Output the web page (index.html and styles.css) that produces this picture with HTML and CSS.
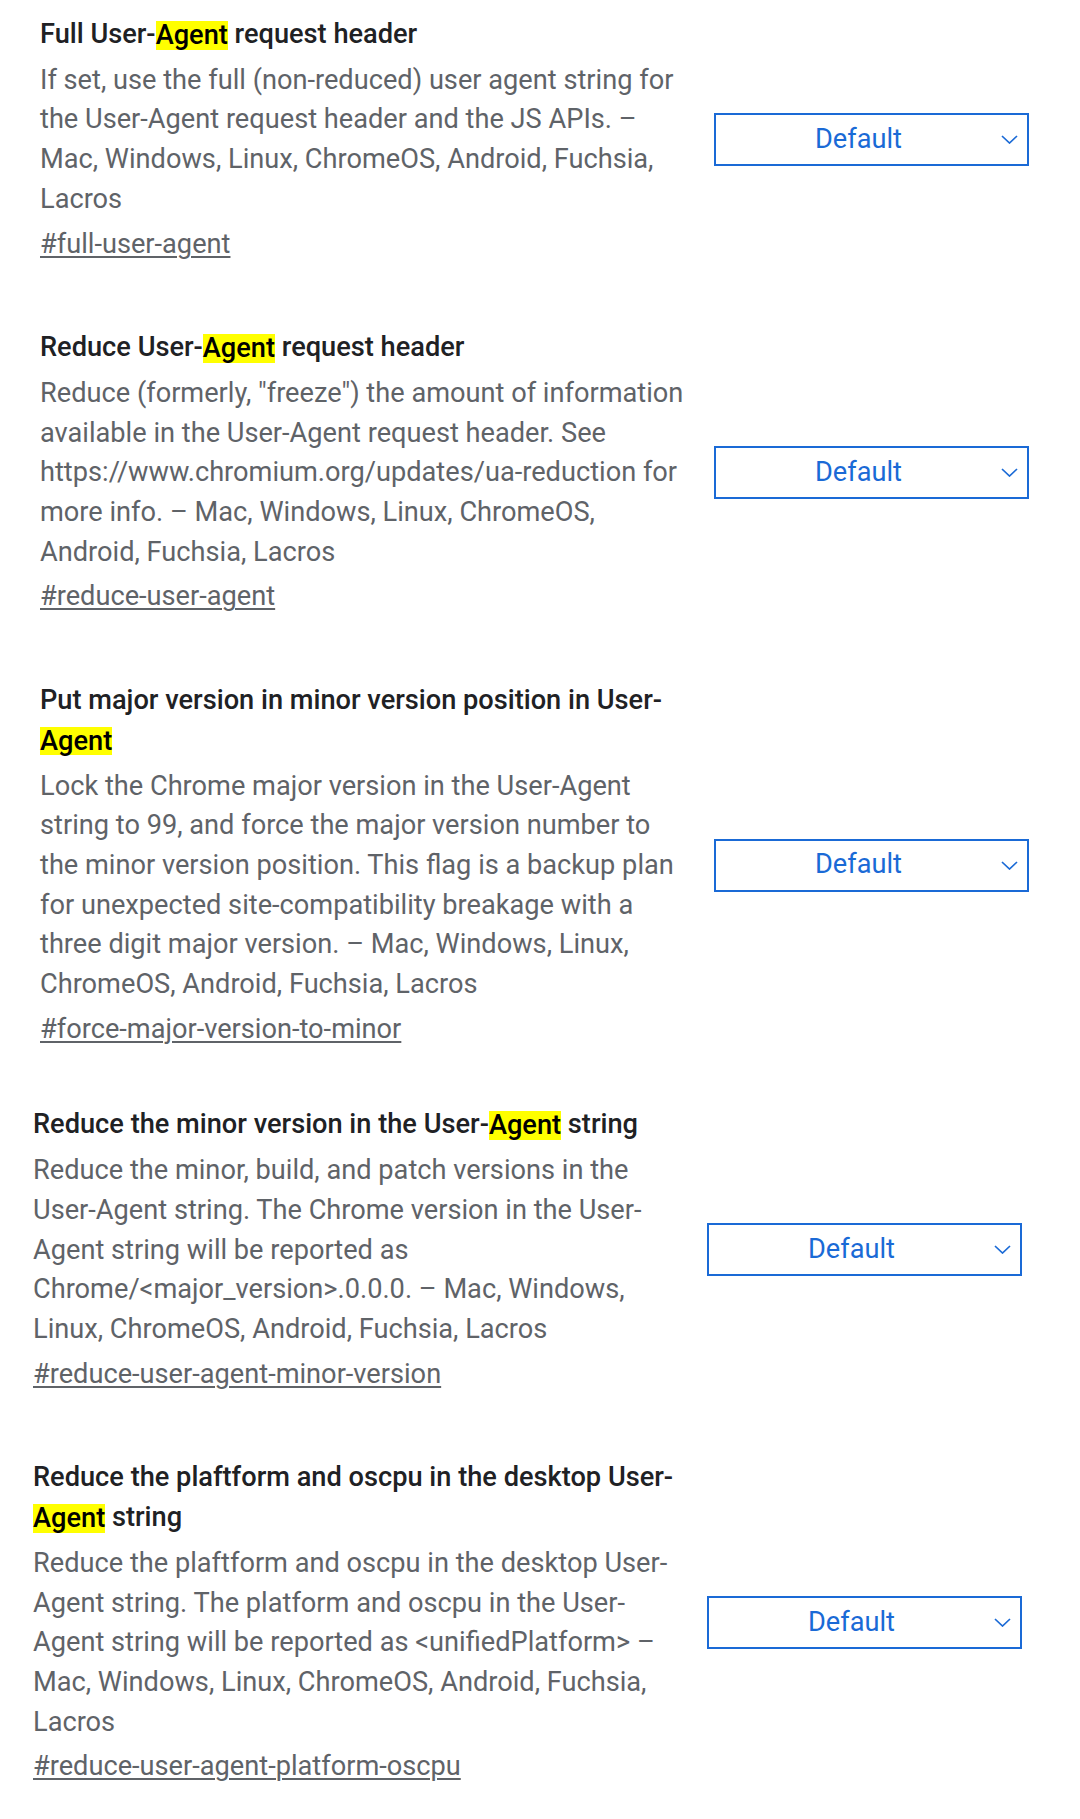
FILE: index.html
```html
<!DOCTYPE html>
<html lang="en">
<head>
<meta charset="utf-8">
<title>Flags</title>
<link rel="stylesheet" href="styles.css">
</head>
<body>
<div class="list">
  <div class="experiment">
    <div class="exp-text">
      <h2 class="exp-name">Full User-<span class="hl">Agent</span> request header</h2>
      <p class="exp-desc">If set, use the full (non-reduced) user agent string for the User-Agent request header and the JS APIs. – Mac, Windows, Linux, ChromeOS, Android, Fuchsia, Lacros</p>
      <p class="exp-link"><a class="permalink" href="#full-user-agent">#full-user-agent</a></p>
    </div>
    <div class="select">
      <span class="select-label">Default</span>
      <svg class="chevron" viewBox="0 0 17 9"><polyline points="1,1 8.5,8 16,1" /></svg>
    </div>
  </div>

  <div class="experiment">
    <div class="exp-text">
      <h2 class="exp-name">Reduce User-<span class="hl">Agent</span> request header</h2>
      <p class="exp-desc">Reduce (formerly, "freeze") the amount of information available in the User-Agent request header. See https://www.chromium.org/updates/ua-reduction for more info. – Mac, Windows, Linux, ChromeOS, Android, Fuchsia, Lacros</p>
      <p class="exp-link"><a class="permalink" href="#reduce-user-agent">#reduce-user-agent</a></p>
    </div>
    <div class="select">
      <span class="select-label">Default</span>
      <svg class="chevron" viewBox="0 0 17 9"><polyline points="1,1 8.5,8 16,1" /></svg>
    </div>
  </div>

  <div class="experiment">
    <div class="exp-text">
      <h2 class="exp-name">Put major version in minor version position in User-<span class="hl">Agent</span></h2>
      <p class="exp-desc">Lock the Chrome major version in the User-Agent string to 99, and force the major version number to the minor version position. This flag is a backup plan for unexpected site-compatibility breakage with a three digit major version. – Mac, Windows, Linux, ChromeOS, Android, Fuchsia, Lacros</p>
      <p class="exp-link"><a class="permalink" href="#force-major-version-to-minor">#force-major-version-to-minor</a></p>
    </div>
    <div class="select">
      <span class="select-label">Default</span>
      <svg class="chevron" viewBox="0 0 17 9"><polyline points="1,1 8.5,8 16,1" /></svg>
    </div>
  </div>

  <div class="experiment experiment--shift experiment--tight">
    <div class="exp-text">
      <h2 class="exp-name">Reduce the minor version in the User-<span class="hl">Agent</span> string</h2>
      <p class="exp-desc">Reduce the minor, build, and patch versions in the User-Agent string. The Chrome version in the User-Agent string will be reported as Chrome/&lt;major_version&gt;.0.0.0. – Mac, Windows, Linux, ChromeOS, Android, Fuchsia, Lacros</p>
      <p class="exp-link"><a class="permalink" href="#reduce-user-agent-minor-version">#reduce-user-agent-minor-version</a></p>
    </div>
    <div class="select">
      <span class="select-label">Default</span>
      <svg class="chevron" viewBox="0 0 17 9"><polyline points="1,1 8.5,8 16,1" /></svg>
    </div>
  </div>

  <div class="experiment experiment--shift">
    <div class="exp-text">
      <h2 class="exp-name">Reduce the plaftform and oscpu in the desktop User-<span class="hl">Agent</span> string</h2>
      <p class="exp-desc">Reduce the plaftform and oscpu in the desktop User-Agent string. The platform and oscpu in the User-Agent string will be reported as &lt;unifiedPlatform&gt; – Mac, Windows, Linux, ChromeOS, Android, Fuchsia, Lacros</p>
      <p class="exp-link"><a class="permalink" href="#reduce-user-agent-platform-oscpu">#reduce-user-agent-platform-oscpu</a></p>
    </div>
    <div class="select">
      <span class="select-label">Default</span>
      <svg class="chevron" viewBox="0 0 17 9"><polyline points="1,1 8.5,8 16,1" /></svg>
    </div>
  </div>
</div>
</body>
</html>
```

FILE: styles.css
```css
html, body {
  margin: 0;
  padding: 0;
  background: #ffffff;
}

body {
  font-family: Roboto, "Noto Sans", "Liberation Sans", sans-serif;
  font-size: 27.2px;
  line-height: 39.7px;
  color: #5f6368;
}

.list {
  display: flex;
  flex-direction: column;
}

.experiment {
  display: flex;
  align-items: center;
  padding: 32px 0 32px 40px;
}

.experiment:first-child {
  padding-top: 15px;
}

.experiment--shift {
  padding-left: 33px;
}

.experiment--tight {
  padding-top: 24px;
}

.exp-text {
  flex: none;
  width: 650px;
}

.exp-name {
  margin: 0 0 6px;
  font-size: inherit;
  line-height: inherit;
  font-weight: 500;
  color: #202124;
}

.hl {
  background: #ffff00;
  color: #000000;
  display: inline-block;
  line-height: 28.5px;
  vertical-align: -1px;
}

.exp-desc {
  margin: 0 0 5px;
}

.exp-link {
  margin: 0;
}

.permalink {
  color: #5f6368;
  text-decoration: underline;
  text-decoration-thickness: 1.5px;
  text-underline-offset: 3px;
}

.select {
  flex: none;
  box-sizing: border-box;
  width: 315px;
  height: 53px;
  margin-left: 24px;
  border: 2px solid #1a6ad6;
  display: flex;
  align-items: center;
  color: #1a6ad6;
}

.select-label {
  flex: 1;
  text-align: center;
}

.chevron {
  flex: none;
  width: 17px;
  height: 9px;
  margin-right: 9px;
  fill: none;
  stroke: #1a6ad6;
  stroke-width: 1.7;
}
```
